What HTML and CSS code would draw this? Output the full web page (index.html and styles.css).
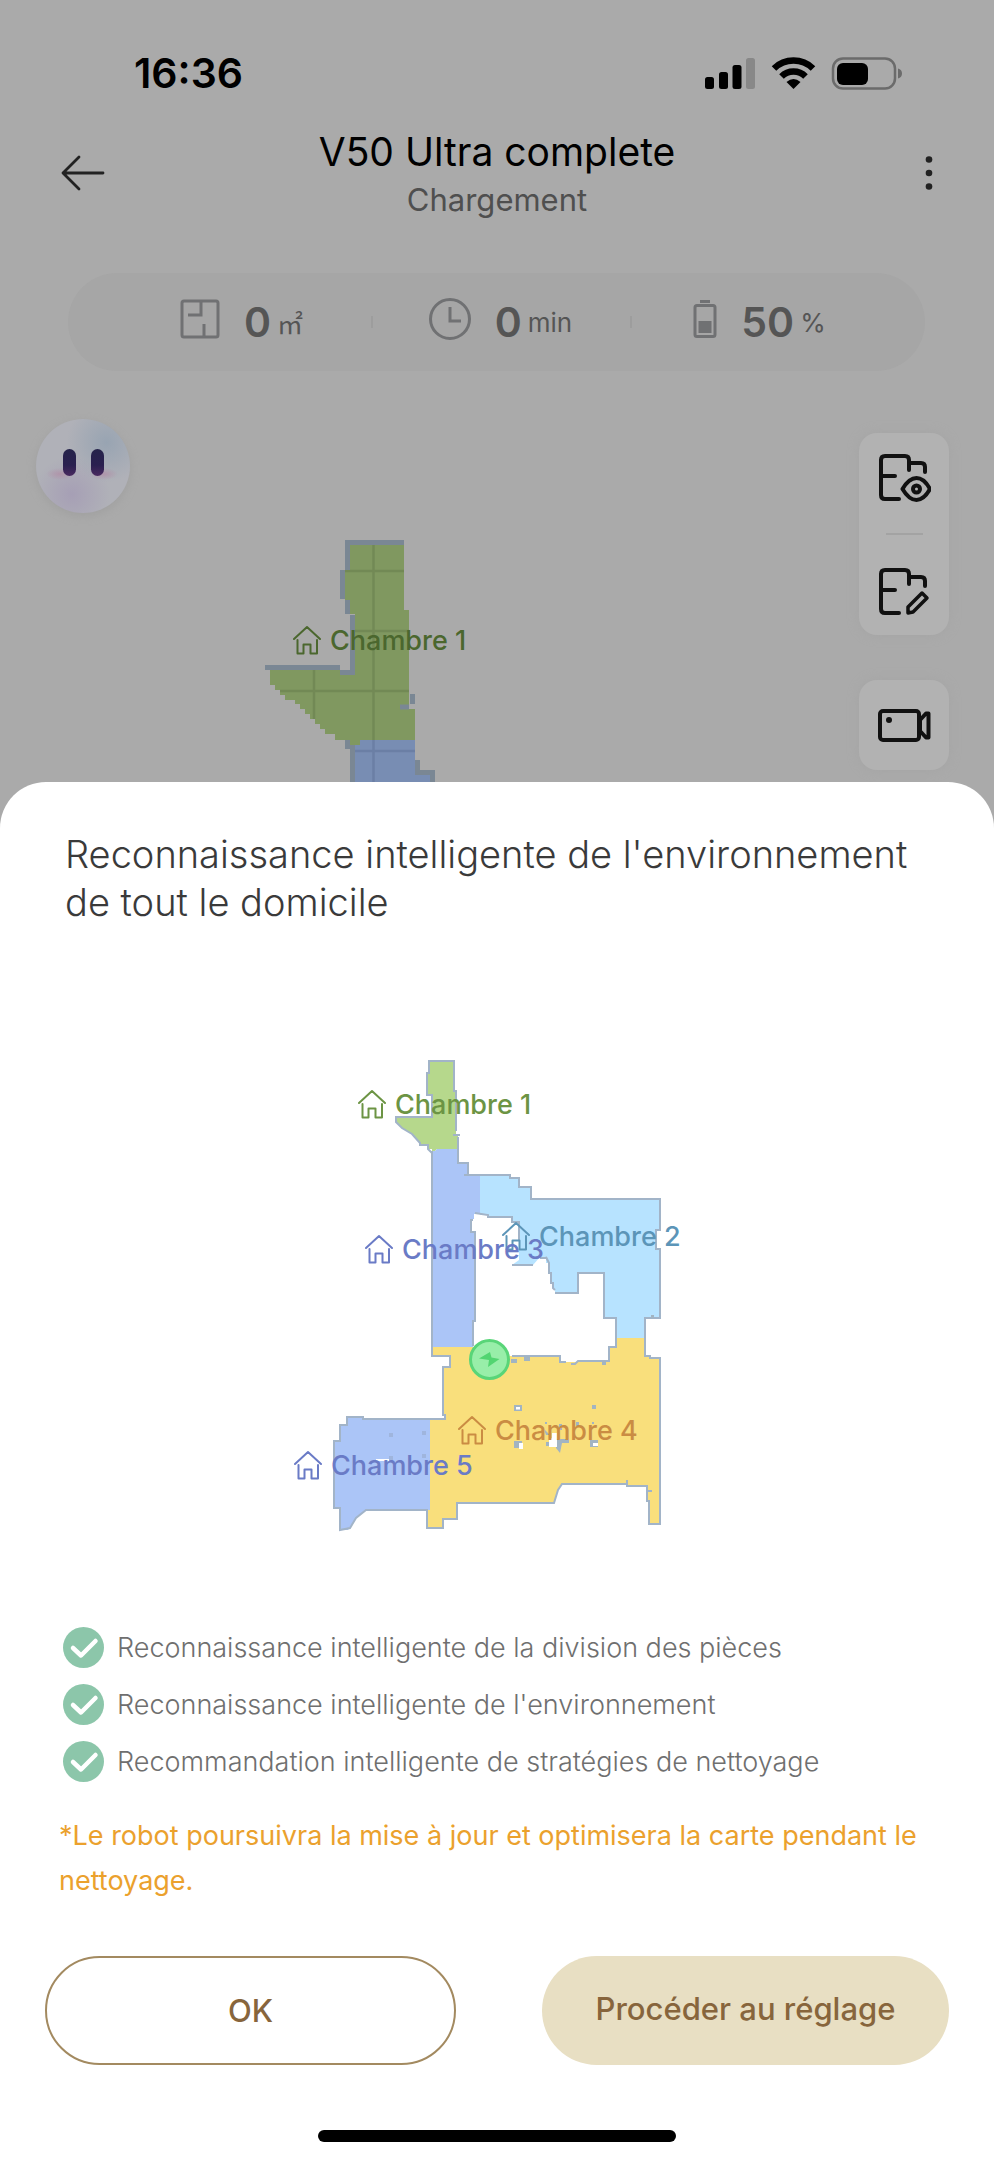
FILE: index.html
```html
<!DOCTYPE html>
<html lang="fr">
<head>
    <meta charset="UTF-8">
    <meta name="viewport" content="width=device-width, initial-scale=1.0">
    <title>V50 Ultra complete</title>
    <link rel="stylesheet" href="styles.css">
</head>

<body>
    <!-- shared icons -->
    <svg class="defs" width="0" height="0" aria-hidden="true">
      <symbol id="house" viewBox="0 0 28 30">
        <path d="M1 14L14 2L27 14M4.500 15V28.500H10.500V19.500H17.500V28.500H24V15"/>
      </symbol>
      <symbol id="check" viewBox="0 0 41 41">
        <circle cx="20.500" cy="20.500" r="20.500" fill="#8cc6aa"/>
        <path d="M10 21L18 28.500L32.500 14" fill="none" stroke="#fff" stroke-width="4.500" stroke-linecap="round" stroke-linejoin="round"/>
      </symbol>
    </svg>

    <div class="status">
      <span class="time">16:36</span>
      <svg class="status-icons" width="197" height="34" viewBox="705 55 197 34" aria-hidden="true">
        <rect x="705" y="76" width="9" height="12" rx="2.500"/>
        <rect x="719" y="71" width="9" height="17" rx="2.500"/>
        <rect x="732.500" y="64" width="9" height="24" rx="2.500"/>
        <rect x="746" y="57" width="9" height="31" rx="2.500" fill="#888"/>
        <g fill="none" stroke="#000" stroke-width="6.500">
          <path d="M774 67.500A28 28 0 0 1 813 67.500"/>
          <path d="M781.500 75.500A17 17 0 0 1 805.500 75.500"/>
        </g>
        <path d="M786.500 81Q793.500 75 800.500 81L793.500 88Z"/>
        <rect x="833" y="57.500" width="62" height="30" rx="10" fill="none" stroke="#6b6b6b" stroke-width="2.500"/>
        <rect x="837" y="62" width="31" height="22" rx="6"/>
        <path d="M898 67.500Q902 68.500 902 72.500T898 77.500Z" fill="#6b6b6b"/>
      </svg>
    </div>

    <header>
      <button class="icon-btn" aria-label="Retour">
        <svg width="44" height="36" viewBox="0 0 44 36"><path d="M42 18H2M18 2L2 18L18 34" fill="none" stroke="#222" stroke-width="2.800" stroke-linecap="round" stroke-linejoin="round"/></svg>
      </button>
      <div class="titles">
        <h1>V50 Ultra complete</h1>
        <p>Chargement</p>
      </div>
      <button class="icon-btn right" aria-label="Menu">
        <svg width="8" height="36" viewBox="0 0 8 36" fill="#222"><circle cx="4" cy="4.500" r="3.300"/><circle cx="4" cy="18" r="3.300"/><circle cx="4" cy="31.500" r="3.300"/></svg>
      </button>
    </header>

    <div class="stats">
      <div class="stat">
        <svg width="40" height="40" viewBox="0 0 40 40" fill="none" stroke="#707173" stroke-width="3">
          <rect x="2" y="2" width="36" height="36" rx="2"/><path d="M21 2V16H8M24 38V25"/>
        </svg>
        <b>0</b><span class="sqm">㎡</span>
      </div>
      <div class="stat">
        <svg width="42" height="42" viewBox="0 0 42 42" fill="none" stroke="#707173" stroke-width="3">
          <circle cx="21" cy="21" r="19.500"/><path d="M21 9V23H32"/>
        </svg>
        <b>0</b><span>min</span>
      </div>
      <div class="stat">
        <svg width="24" height="40" viewBox="0 0 24 40" fill="none" stroke="#707173" stroke-width="3">
          <rect x="2" y="6.500" width="20" height="31" rx="2"/><path d="M7 2.500H17"/><rect x="5.500" y="22" width="13" height="12" fill="#707173" stroke="none"/>
        </svg>
        <b>50</b><span>%</span>
      </div>
    </div>

    <section class="stage">
      <button class="avatar" aria-label="Assistant">
        <span class="eye"></span><span class="eye"></span>
      </button>

      <svg class="live-map" viewBox="130 371 729 461">
        <path fill="#809860" d="M350 545H404V610H409V709H415V740H360V745H350V740H335V734H325V729H320V724H315V719H310V714H305V709H300V704H295V700H285V695H280V690H275V685H270V669H340V674H355V614H350V600H345V570H350Z"/>
        <path fill="#788db3" d="M360 740H415V772H430V832H355V745H360Z"/>
        <path fill="none" stroke="#728955" stroke-width="2.500" d="M373.500 545V740M314 669V719M345 571H404M355 631H409M280 691H409"/>
        <path fill="none" stroke="#6b7fa5" stroke-width="2.500" d="M373.500 740V832M355 751H415"/>
        <path fill="none" stroke="#7a8794" stroke-width="5" d="M347.500 570V542.500H404M342.500 570V599M347.500 600V614M352.500 615V672.500H340M265 667.500H340M412.500 694V704M400 707H409M347.500 740V749M352.500 745V832M417.500 760V772.500H432.500V832"/>
        <g class="room-label live" transform="translate(293 625)"><use href="#house" width="28" height="30"/><text x="37" y="25">Chambre 1</text></g>
      </svg>

      <div class="tools">
        <div class="tool-group">
          <button class="tool" aria-label="Afficher la carte">
            <svg width="54" height="54" viewBox="0 0 54 54">
              <path d="M22 47H8Q4 47 4 43V8Q4 4 8 4H28Q32 4 32 8V18M32 11H44Q48 11 48 15V20M4 24H18"/>
              <path d="M25.500 37Q32 26 39.500 26T53 37Q47 48 39.500 48T25.500 37Z"/><circle cx="39.500" cy="37" r="3.500"/>
            </svg>
          </button>
          <hr>
          <button class="tool" aria-label="Modifier la carte">
            <svg width="54" height="54" viewBox="0 0 54 54">
              <path d="M22 51H8Q4 51 4 47V12Q4 8 8 8H28Q32 8 32 12V22M32 15H44Q48 15 48 19V24M4 28H18"/>
              <path stroke-width="3.500" d="M31 51V45L45 31L50 36L36 50Z"/>
            </svg>
          </button>
        </div>
        <button class="tool camera" aria-label="Caméra">
          <svg width="54" height="36" viewBox="0 0 54 36">
            <rect x="3" y="4" width="39" height="29" rx="3"/><circle class="dot" cx="12" cy="13" r="3"/><path d="M43 13L49 6.500H51.500V30.500H49L43 24Z"/>
          </svg>
        </button>
      </div>
    </section>

    <main class="sheet">
      <h2>Reconnaissance intelligente de l'environnement de tout le domicile</h2>

      <svg class="home-map" viewBox="0 926 994 701">
        <!-- rooms -->
        <path fill="#b6d88c" d="M429 1061H454V1091H456V1134H458V1149H437L435 1151H432V1149H428V1145H420V1143L412 1134L402 1128L396 1122V1117H432V1095H427V1073H429Z"/>
        <path fill="#abc5f7" d="M432 1151H435L437 1149H458V1164H468V1175H480V1214H474V1219H471V1232H475V1321H473V1348H432Z"/>
        <path fill="#b7e3ff" d="M480 1175H510V1178H519V1187H531V1199H660V1230H656V1248H660V1318H645V1338H616V1318H604V1273H578V1293H555V1288H553V1283H551V1273H549V1263H546V1257H540L533 1265H512L519 1260V1222H512V1217H488V1215H480Z"/>
        <path fill="#f9df7c" d="M432 1347H473V1356H560V1362H578V1361H609V1347H616V1338H645V1356H650V1358H660V1524H649V1501H647V1486H627V1484H562L558 1490L554 1503H457V1519H444V1528H427V1510H430V1419H445V1415H443V1367H450V1356H432Z"/>
        <path fill="#abc5f7" d="M430 1419H363V1417H347V1425H340V1441H334V1508H340V1530H348L356 1518L366 1510H430Z"/>
        <!-- walls -->
        <path class="wall" d="M432 1151V1356H450V1367H443V1415H445V1419H363V1417H347V1425H340V1441H334V1508H340V1530L350 1528L356 1518L366 1510H427V1528H443V1519H457V1503H554L558 1490L562 1484H627V1480V1486H647V1491L652 1491M647 1491V1501H649V1524H660V1358H650V1356H645V1318H660V1249H656V1230H660V1199H531V1187H519V1178H510V1175H464M468 1175V1163H458V1137M453 1135H460M456 1131V1091H454V1061H429V1073H427V1095H432V1117H396V1122L402 1128L412 1134L420 1143V1145H428V1149L432 1153"/>
        <path class="wall" d="M475 1213L488 1215V1217H512V1222H519V1240M473 1220H471V1232H475V1321H473V1346M512 1265H533M540 1258H546V1257L549 1263V1273H551V1283H553V1288L555 1290M555 1293H578V1273H604V1318H616V1347H609V1361H578L575 1364H571M512 1356H560V1362H566"/>
        <!-- furniture -->
        <g fill="#a2b4c2">
          <path d="M524 1356H530V1361H524ZM511 1359H517V1363H511ZM602 1361H606V1365H602ZM592 1405H596V1409H592ZM651 1315H654V1318H651Z"/>
          <path d="M514 1405H522V1411H514ZM514 1441H522V1448H514ZM590 1440H598V1447H590ZM546 1442H550V1446H546ZM556 1439H569V1443H562L560 1453L556 1448ZM544 1429L550 1435L546 1435ZM576 1422H579V1426H576ZM559 1424H562V1430H559ZM545 1422H547V1424H545ZM592 1422H594V1424H592Z"/>
          <path fill="#9fb5dd" d="M389 1433H393V1437H389ZM422 1431H426V1435H422ZM389 1456H393V1460H389ZM422 1454H426V1458H422Z"/>
        </g>
        <path fill="#fff" d="M516 1407H520V1409.500H516ZM519 1443H523V1449H519ZM593 1443H598V1446H593ZM552 1433H557V1447H549V1440L552 1438ZM376 1459H389V1461H376Z"/>
        <!-- dock -->
        <circle cx="489.500" cy="1359.500" r="19" fill="#98eea9" stroke="#59d578" stroke-width="3"/>
        <path fill="#52d571" d="M479 1358.500L489 1360L488 1367L499.500 1359L491.500 1357.500L490 1352Z"/>

        <g class="room-label green" transform="translate(358 1089)"><use href="#house" width="28" height="30"/><text x="37" y="25">Chambre 1</text></g>
        <g class="room-label teal" transform="translate(502 1221)"><use href="#house" width="28" height="30"/><text x="37" y="25">Chambre 2</text></g>
        <g class="room-label indigo" transform="translate(365 1234)"><use href="#house" width="28" height="30"/><text x="37" y="25">Chambre 3</text></g>
        <g class="room-label amber" transform="translate(458 1415)"><use href="#house" width="28" height="30"/><text x="37" y="25">Chambre 4</text></g>
        <g class="room-label indigo" transform="translate(294 1450)"><use href="#house" width="28" height="30"/><text x="37" y="25">Chambre 5</text></g>
      </svg>

      <ul class="features">
        <li><svg width="41" height="41"><use href="#check"/></svg>Reconnaissance intelligente de la division des pièces</li>
        <li><svg width="41" height="41"><use href="#check"/></svg>Reconnaissance intelligente de l'environnement</li>
        <li><svg width="41" height="41"><use href="#check"/></svg>Recommandation intelligente de stratégies de nettoyage</li>
      </ul>

      <p class="note">*Le robot poursuivra la mise à jour et optimisera la carte pendant le nettoyage.</p>

      <div class="actions">
        <button class="btn outline">OK</button>
        <button class="btn filled">Procéder au réglage</button>
      </div>

      <div class="home-bar"></div>
    </main>
</body>
</html>
```
FILE: styles.css
```css
* {
  box-sizing: border-box;
}

body {
  margin: 0;
  background-color: #aaaaaa;
  font-family: Inter, "Liberation Sans", sans-serif;
}

h1, h2, p, ul {
  margin: 0;
  padding: 0;
  font-weight: 400;
}

button {
  border: none;
  padding: 0;
  background: none;
  font-family: inherit;
  cursor: pointer;
}

svg {
  display: block;
}

.defs {
  position: absolute;
}

/* phone status bar */
.status {
  display: flex;
  justify-content: space-between;
  align-items: center;
  padding: 48px 92px 0 134px;
}

.time {
  font-size: 41px;
  line-height: 50px;
  font-weight: 600;
}

header {
  display: flex;
  justify-content: space-between;
  align-items: center;
  padding: 30px 61px 0;
}

.icon-btn {
  width: 48px;
}

.icon-btn.right svg {
  margin-left: auto;
}

.titles {
  text-align: center;
}

.titles h1 {
  font-size: 39px;
  line-height: 48px;
}

.titles p {
  margin-top: 6px;
  font-size: 31px;
  line-height: 36px;
  color: #4f4f4f;
}

/* area / time / battery */
.stats {
  display: flex;
  height: 98px;
  margin: 55px 69px 0 68px;
  padding: 0 36px 0 44px;
  border-radius: 49px;
  background-color: #a6a6a6;
}

.stat {
  flex: 1;
  display: flex;
  justify-content: center;
  align-items: center;
  color: #555;
  position: relative;
}

.stat + .stat::before {
  content: "";
  position: absolute;
  left: 0;
  width: 2px;
  height: 12px;
  background-color: #9d9d9d;
}

.stat svg {
  margin: 0 24px 6px 0;
}

.stat b {
  font-size: 41px;
  font-weight: 600;
}

.stat span {
  margin-left: 6px;
  font-size: 26px;
}

.stat .sqm {
  font-family: "Noto Sans CJK SC", sans-serif;
}

/* live map with floating tools */
.stage {
  display: flex;
  align-items: flex-start;
  padding: 0 45px 0 36px;
}

.avatar {
  display: flex;
  justify-content: center;
  gap: 15px;
  width: 94px;
  height: 94px;
  margin-top: 48px;
  padding-top: 30px;
  border-radius: 50%;
  background:
    radial-gradient(ellipse 14px 6px at 24px 55px, #b095aa, transparent),
    radial-gradient(ellipse 14px 6px at 68px 55px, #b095aa, transparent),
    radial-gradient(circle at 75% 25%, #98a4b2, transparent 40%),
    radial-gradient(circle at 38% 80%, #a69fb5, transparent 40%),
    #b0b1b8;
  box-shadow: 0 3px 10px #a0a0a0;
}

.eye {
  width: 13px;
  height: 27px;
  border-radius: 7px;
  background: linear-gradient(#25234a, #2a2050 60%, #4a2a60);
}

.live-map {
  flex: 1;
  min-width: 0;
}

.tools {
  width: 90px;
  margin-top: 62px;
}

.tool-group, .camera {
  border-radius: 18px;
  background-color: #b2b2b2;
  box-shadow: 0 0 12px #a5a5a5;
}

.tool {
  display: flex;
  justify-content: center;
  align-items: center;
  width: 90px;
  height: 92px;
}

.tool svg {
  fill: none;
  stroke: #111;
  stroke-width: 4;
  stroke-linecap: round;
  stroke-linejoin: round;
}

.tool .dot {
  fill: #111;
  stroke: none;
}

.tool-group hr {
  width: 37px;
  height: 2px;
  margin: 8px auto;
  border: none;
  background-color: #a3a3a3;
}

.camera {
  height: 90px;
  margin-top: 45px;
}

/* bottom sheet */
.sheet {
  position: relative;
  margin-top: -50px;
  padding: 48px 0 18px;
  border-radius: 46px 46px 0 0;
  background-color: #fff;
}

.sheet h2 {
  padding: 0 65px;
  font-size: 38px;
  line-height: 48px;
  font-weight: 300;
  color: #3a3a3a;
}

.home-map {
  width: 100%;
}

.wall {
  fill: none;
  stroke: #a2b4c8;
  stroke-width: 2;
}

.room-label {
  fill: none;
  stroke-width: 2;
}

.room-label text {
  font-size: 27px;
  font-weight: 500;
  stroke: none;
}

.room-label use {
  stroke-linejoin: round;
  stroke-linecap: round;
}

.live { stroke: #4b672e; }
.live text { fill: #4b672e; }
.green { stroke: #6c9444; }
.green text { fill: #6c9444; }
.teal { stroke: #5c95b8; }
.teal text { fill: #5c95b8; }
.indigo { stroke: #6a7bc6; }
.indigo text { fill: #6a7bc6; }
.amber { stroke: #ca8c43; }
.amber text { fill: #ca8c43; }

.features {
  display: flex;
  flex-direction: column;
  gap: 16px;
  padding: 0 63px;
  list-style: none;
}

.features li {
  display: flex;
  align-items: center;
  gap: 13px;
  font-size: 27px;
  line-height: 41px;
  font-weight: 300;
  color: #6f6f6f;
}

.note {
  margin-top: 31px;
  padding: 0 59px;
  font-size: 27px;
  line-height: 45px;
  color: #eba12d;
}

.actions {
  display: flex;
  gap: 86px;
  margin-top: 53px;
  padding: 0 45px;
}

.btn {
  flex: 1;
  height: 109px;
  border-radius: 55px;
  font-size: 31px;
  font-weight: 500;
  color: #87653c;
}

.outline {
  border: 2px solid #a38a60;
}

.filled {
  padding-bottom: 4px;
  background-color: #e8dfc3;
}

.home-bar {
  width: 36%;
  height: 12px;
  margin: 65px auto 0;
  border-radius: 6px;
  background-color: #000;
}
```
